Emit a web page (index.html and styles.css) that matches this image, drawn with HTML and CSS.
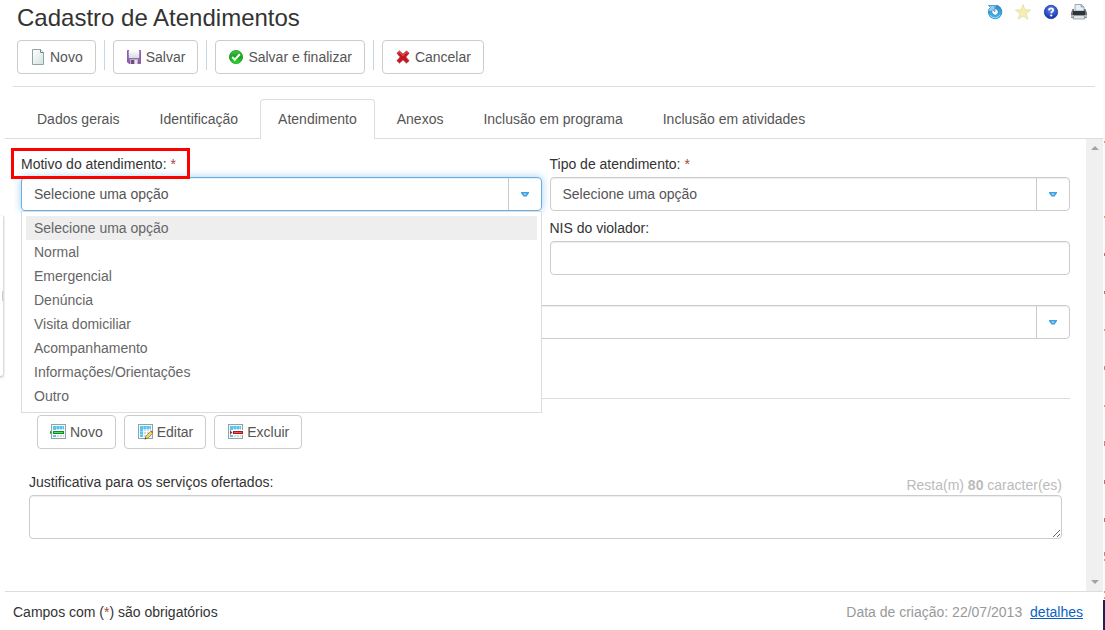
FILE: index.html
```html
<!DOCTYPE html>
<html lang="pt-BR">
<head>
<meta charset="utf-8">
<title>Cadastro de Atendimentos</title>
<link rel="stylesheet" href="styles.css">
</head>
<body>
<svg class="defs" aria-hidden="true">
  <defs>
    <linearGradient id="gPage" x1="0" y1="0" x2="1" y2="1"><stop offset="0" stop-color="#ffffff"/><stop offset="1" stop-color="#d3e2e1"/></linearGradient>
    <linearGradient id="gDisk" x1="0" y1="0" x2="0" y2="1"><stop offset="0" stop-color="#b892cc"/><stop offset="1" stop-color="#8a4fa8"/></linearGradient>
    <linearGradient id="gLabel" x1="0" y1="0" x2="0" y2="1"><stop offset="0" stop-color="#ffffff"/><stop offset="1" stop-color="#d5dde2"/></linearGradient>
    <linearGradient id="gOk" x1="0" y1="0" x2="0" y2="1"><stop offset="0" stop-color="#4cc04c"/><stop offset=".5" stop-color="#12a51d"/><stop offset="1" stop-color="#2fe02f"/></linearGradient>
    <linearGradient id="gBlue" gradientUnits="userSpaceOnUse" x1="0" y1="1" x2="0" y2="15"><stop offset="0" stop-color="#3a84bd"/><stop offset="1" stop-color="#3dbcf2"/></linearGradient>
    <radialGradient id="gHelp" cx=".5" cy=".35" r=".6"><stop offset="0" stop-color="#5f8df0"/><stop offset="1" stop-color="#1c34ae"/></radialGradient>
    <g id="grid">
      <rect x="1.500" y=".5" width="14" height="14" fill="#f4fafa" stroke="#8fa5a5"/>
      <rect x="3" y="2" width="11" height="11" fill="#cddde0"/>
      <path d="M3 2h11v3H3zM3 5h3v8H3z" fill="#55c6f4"/>
      <path d="M6.500 5v8M9.500 5v8M12.500 5v8M6 7.500h8M6 10.500h8" stroke="#fff" stroke-width=".8"/>
      <path d="M6.500 2v3M9.500 2v3M12.500 2v3M3 7.500h3M3 10.500h3" stroke="#8edcf9" stroke-width=".8"/>
    </g>
    <g id="caret">
      <path d="M0 0h8v1L5.500 4.500h-3L0 1z" fill="#3d9fe0"/>
      <path d="M2 1.500h4L4.500 3h-1z" fill="#a5dcf8"/>
    </g>
  </defs>
</svg>
<div class="page">
  <aside class="side-panel" aria-hidden="true"><span class="grip"></span></aside>
  <main class="window">
    <header class="header">
      <div class="title-row">
        <h1>Cadastro de Atendimentos</h1>
        <nav class="tools" aria-label="Ferramentas">
          <button type="button" aria-label="Atualizar"><svg width="16" height="16" viewBox="0 0 16 16"><path d="M8.500 3A5 5 0 1 1 3.200 7" fill="none" stroke="#2f7fb8" stroke-width="4.400"/><path d="M8.500 3A5 5 0 1 1 3.200 7" fill="none" stroke="url(#gBlue)" stroke-width="3.600"/><path d="M1.500 1.500h6.300v6.300L5.700 5.900 3.600 8 1.300 5.700 3.500 3.600z" fill="#8fd0f0" stroke="#3a8cc2" stroke-width=".8"/><path d="M3 10.800a5.600 5.600 0 0 0 10 0" fill="none" stroke="#86dbfb"/></svg></button>
          <button type="button" aria-label="Favorito"><svg width="16" height="16" viewBox="0 0 16 16"><path d="M8 .5l2 5.300 5.600.2-4.400 3.500 1.600 5.700L8 12l-4.800 3.200 1.600-5.700L.4 6 6 5.800z" fill="#f7edb0" stroke="#e6dca8" stroke-width=".8"/></svg></button>
          <button type="button" aria-label="Ajuda"><svg width="16" height="16" viewBox="0 0 16 16"><circle cx="8" cy="8" r="6.700" fill="url(#gHelp)" stroke="#233fa9" stroke-width=".8"/><path d="M5.900 6.400C6 4.800 7 4.400 8 4.400c1.300 0 2.200.7 2.200 1.800 0 1.400-2 1.500-2 3" fill="none" stroke="#fff" stroke-width="1.700"/><circle cx="8.200" cy="11.500" r="1.100" fill="#fff"/></svg></button>
          <button type="button" aria-label="Imprimir"><svg width="16" height="16" viewBox="0 0 16 16"><path d="M4 7V.5h6.500L13 3v4z" fill="#e6f0f7" stroke="#8794a0" stroke-width=".8"/><path d="M10 .5V3h3" fill="#b8cad4" stroke="#7d8b94" stroke-width=".6"/><path d="M1.500 5H3v2h10V5h1.500L16 9v5H0V9z" fill="#6c7278"/><path d="M2 7h12v4H2z" fill="#2f3338"/><path d="M0 11h16v2.500H0z" fill="#b3b9be"/><path d="M3 11.500h10l1 3.500H2z" fill="#dfe5e9" stroke="#70777d" stroke-width=".6"/></svg></button>
        </nav>
      </div>
      <div class="toolbar">
        <button type="button" class="btn"><svg width="16" height="16" viewBox="0 0 16 16"><path d="M2.500.5h8l3 3v12h-11z" fill="url(#gPage)" stroke="#8fa3a3"/><path d="M10.500.5v3h3" fill="#fff" stroke="#6f8585"/></svg>Novo</button>
        <span class="sep"></span>
        <button type="button" class="btn"><svg width="16" height="16" viewBox="0 0 16 16"><path d="M1.500 1.500h13v13H3L1.500 13z" fill="url(#gDisk)" stroke="#8c5ca6"/><path d="M3 1h10v8H3z" fill="url(#gLabel)"/><path d="M4 10h8v5H4z" fill="#b9b3c4"/><path d="M5 11h3v4H5z" fill="#6e5080"/><path d="M9 11h2v4H9z" fill="#e6e3ec"/></svg>Salvar</button>
        <span class="sep"></span>
        <button type="button" class="btn"><svg width="16" height="16" viewBox="0 0 16 16"><circle cx="8" cy="8" r="6.600" fill="url(#gOk)" stroke="#18991e" stroke-width=".8"/><path d="M4.200 8l2.600 2.700 5-5.400" fill="none" stroke="#fff" stroke-width="2"/></svg>Salvar e finalizar</button>
        <span class="sep"></span>
        <button type="button" class="btn"><svg width="16" height="16" viewBox="0 0 16 16"><path d="M2 4.200L4.500 2 8 5.300 11.500 2 14 4.200 10.700 8l3.300 3.700-2.500 2.300L8 10.700 4.500 14 2 11.700 5.300 8z" fill="#c8151e" stroke="#a31a20" stroke-width=".8"/><path d="M3.300 4.200l1.200-1L8 6.500l3.500-3.300 1.200 1" fill="none" stroke="#ec7e80" stroke-width=".8"/></svg>Cancelar</button>
      </div>
    </header>

    <nav class="tabs" role="tablist">
      <button type="button" role="tab" class="tab">Dados gerais</button>
      <button type="button" role="tab" class="tab">Identificação</button>
      <button type="button" role="tab" class="tab active" aria-selected="true">Atendimento</button>
      <button type="button" role="tab" class="tab">Anexos</button>
      <button type="button" role="tab" class="tab">Inclusão em programa</button>
      <button type="button" role="tab" class="tab">Inclusão em atividades</button>
    </nav>

    <div class="body">
      <form class="form">
        <div class="fields">
          <div class="field">
            <label for="motivo"><span class="marked">Motivo do atendimento: <em>*</em></span></label>
            <div class="combo focused">
              <select id="motivo"><option>Selecione uma opção</option></select>
              <span class="arrow"><svg width="8" height="5" viewBox="0 0 8 5"><use href="#caret"/></svg></span>
              <ul class="options" role="listbox" aria-label="Motivo do atendimento">
                <li role="option" aria-selected="true" class="current">Selecione uma opção</li>
                <li role="option">Normal</li>
                <li role="option">Emergencial</li>
                <li role="option">Denúncia</li>
                <li role="option">Visita domiciliar</li>
                <li role="option">Acompanhamento</li>
                <li role="option">Informações/Orientações</li>
                <li role="option">Outro</li>
              </ul>
            </div>
          </div>
          <div class="field">
            <label for="tipo">Tipo de atendimento: <em>*</em></label>
            <div class="combo">
              <select id="tipo"><option>Selecione uma opção</option></select>
              <span class="arrow"><svg width="8" height="5" viewBox="0 0 8 5"><use href="#caret"/></svg></span>
            </div>
          </div>
          <div class="field second">
            <label for="nis">NIS do violador:</label>
            <input id="nis" type="text">
          </div>
          <div class="field wide">
            <div class="combo">
              <select aria-label="Opção"><option></option></select>
              <span class="arrow"><svg width="8" height="5" viewBox="0 0 8 5"><use href="#caret"/></svg></span>
            </div>
          </div>
        </div>
        <hr>
        <div class="actions">
          <button type="button" class="btn"><svg width="16" height="16" viewBox="0 0 16 16"><use href="#grid"/><path d="M3 8.500h11" stroke="#fff" stroke-width="5"/><path d="M3 8.500h11" stroke="#178a25" stroke-width="3"/><path d="M4 8.500h9" stroke="#4be25b"/><path d="M0 6.500l2 2-2 2z" fill="#24a735"/></svg>Novo</button>
          <button type="button" class="btn"><svg width="16" height="16" viewBox="0 0 16 16"><use href="#grid"/><path d="M8 15l1-3 5-5 2 2-5 5z" fill="#f0d766" stroke="#8b7c35" stroke-width=".7"/><path d="M13.500 7.500l2 2 .5-2-1-1z" fill="#d34d50"/><path d="M7.500 15.500l1-2 1 1z" fill="#222"/></svg>Editar</button>
          <button type="button" class="btn"><svg width="16" height="16" viewBox="0 0 16 16"><use href="#grid"/><path d="M4 8.500h12" stroke="#fff" stroke-width="5"/><path d="M6 8.500h10" stroke="#a51a1a" stroke-width="3"/><path d="M7 8.500h8" stroke="#f0564f"/><path d="M3 6.500l2.500 2L3 10.500z" fill="#b32222"/></svg>Excluir</button>
        </div>
        <div class="note">
          <div class="note-head">
            <label for="just">Justificativa para os serviços ofertados:</label>
            <span class="counter">Resta(m) <b>80</b> caracter(es)</span>
          </div>
          <textarea id="just"></textarea>
        </div>
      </form>
      <div class="scrollbar" aria-hidden="true">
        <svg width="8" height="4" viewBox="0 0 8 4"><path d="M4 0l4 4H0z" fill="#a3a3a3"/></svg>
        <svg width="8" height="4" viewBox="0 0 8 4"><path d="M0 0h8L4 4z" fill="#a3a3a3"/></svg>
      </div>
    </div>

    <footer class="footer">
      <span>Campos com (<em>*</em>) são obrigatórios</span>
      <span class="created">Data de criação: 22/07/2013 <a href="#detalhes">detalhes</a></span>
    </footer>
  </main>
  <aside class="edge" aria-hidden="true">
    <svg class="ticks" width="2" height="600" viewBox="0 0 2 600"><path d="M1.500 141v2M1.500 216v2M1.500 329v2M1.500 405v2" stroke="#e0a050"/><path d="M1.500 253v3M1.500 291v3M1.500 480v4M1.500 518v4" stroke="#b9707c"/><path d="M1.500 366v4M1.500 441v5M1.500 552v4" stroke="#cf8272"/><path d="M1.500 559v2M1.500 591v2M1.500 597v2" stroke="#e0a050"/></svg>
    <span class="navy"></span>
  </aside>
</div>
</body>
</html>
```
FILE: styles.css
```css
* { box-sizing: border-box; }
body {
  margin: 0;
  background: #fff;
  color: #333;
  font: 14px/20px "Liberation Sans", Arial, sans-serif;
}
button, select, input, textarea { font: inherit; color: inherit; }
em { color: #a94442; font-style: normal; }
.defs { position: absolute; width: 0; height: 0; }

.page { display: flex; min-height: 100vh; }
.side-panel { width: 5px; padding-top: 216px; overflow: hidden; }
.grip {
  display: flex;
  align-items: center;
  width: 4px;
  height: 161px;
  border-right: 1px solid #ddd;
  border-bottom: 1px solid #ccc;
  border-radius: 0 0 4px 0;
  box-shadow: 0 1px 3px #ccc;
}
.grip::before { content: ""; width: 2px; height: 10px; border-right: 1px solid #ccc; }
.window { flex: 1; min-width: 0; display: flex; flex-direction: column; }
.edge { width: 2px; display: flex; flex-direction: column; background: #fcfcfc; }
.ticks { display: block; }
.navy { flex: 1; background: #1c2260; }

.header { margin: 0 8px; padding: 4px 4px 12px; border-bottom: 1px solid #ddd; }
.title-row { display: flex; justify-content: space-between; }
h1 { margin: 0; font-size: 24px; line-height: 28px; font-weight: normal; }
.tools { display: flex; gap: 12px; padding-right: 4px; }
.tools button { width: 16px; height: 16px; padding: 0; border: 0; background: none; }
.tools svg { display: block; }
.toolbar { display: flex; margin-top: 8px; }
.btn {
  display: flex;
  align-items: center;
  gap: 4px;
  height: 34px;
  padding: 0 12px;
  border: 1px solid #ccc;
  border-radius: 4px;
  background: #fff;
  color: #555;
}
.sep { width: 1px; height: 30px; margin: 0 8px; background: #c5d6e4; }

.tabs { display: flex; gap: 4px; margin-top: 12px; padding-left: 14px; border-bottom: 1px solid #ddd; }
.tab {
  height: 40px;
  margin-bottom: -1px;
  padding: 0 17px 2px;
  border: 1px solid transparent;
  border-bottom: 0;
  border-radius: 4px 4px 0 0;
  background: none;
  color: #555;
}
.tab.active { border-color: #ddd; background: #fff; }

.body { flex: 1; display: flex; }
.form { flex: 1; min-width: 0; padding: 15px 16px 0; }
.fields { display: grid; grid-template-columns: 1fr 1fr; column-gap: 8px; row-gap: 7px; }
.second { grid-column: 2; }
.wide { grid-column: 1 / 3; padding-top: 23px; }
.field label { display: block; height: 20px; margin-bottom: 3px; }
.marked { position: relative; }
.marked::after {
  content: "";
  position: absolute;
  z-index: 3;
  inset: -8px -14px -7px -10px;
  border: 3px solid #f00;
}
.combo { position: relative; display: flex; height: 34px; border: 1px solid #ccc; border-radius: 4px; box-shadow: inset 0 1px 1px #eee; }
.combo.focused { border-color: #66afe9; box-shadow: inset 0 1px 1px #eee, 0 0 8px #a3cff1; }
.combo select { flex: 1; min-width: 0; appearance: none; padding: 0 12px; border: 0; background: none; color: #555; outline: 0; }
.arrow { display: flex; align-items: center; justify-content: center; width: 33px; border-left: 1px solid #ccc; }
.options {
  position: absolute;
  z-index: 2;
  top: 33px;
  left: -1px;
  right: -1px;
  margin: 0;
  padding: 4px;
  border: 1px solid #ddd;
  background: #fff;
  list-style: none;
  color: #666;
}
.options li { height: 24px; padding: 0 8px; line-height: 24px; }
.options .current { background: #eee; }
input, textarea {
  display: block;
  width: 100%;
  height: 34px;
  padding: 0 12px;
  border: 1px solid #ccc;
  border-radius: 4px;
  background: #fff;
  box-shadow: inset 0 1px 1px #eee;
}
hr { margin: 59px 0 16px; border: 0; border-top: 1px solid #ddd; }
.actions { display: flex; gap: 8px; padding-left: 16px; }
.note { margin: 23px 8px 0; }
.note-head { display: flex; justify-content: space-between; height: 23px; }
.counter { padding-top: 3px; color: #bbb; }
textarea { height: 44px; resize: vertical; }
.scrollbar {
  display: flex;
  flex-direction: column;
  align-items: center;
  justify-content: space-between;
  width: 17px;
  padding: 7px 0;
  background: #f0f0f0;
}

.footer { display: flex; justify-content: space-between; padding: 10px 20px 8px 8px; border-top: 1px solid #ddd; }
.created { color: #999; }
.created a { margin-left: 4px; color: #0a62c4; }
```
